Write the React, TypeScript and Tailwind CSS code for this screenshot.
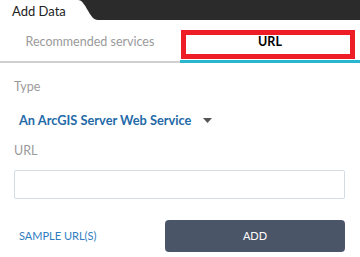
import React from "react";

export default function App() {
  return (
    <div className="relative w-[360px] h-[257px] bg-white overflow-hidden" style={{ fontFamily: "Lato, 'Open Sans', sans-serif" }}>
      {/* header */}
      <div className="flex h-[20px] bg-[#2b2b2b]">
        <div className="w-[78px] bg-white flex items-center pl-[12px] text-[13px] text-[#222] leading-none pt-[3px]">Add Data</div>
        <svg width="20" height="20" viewBox="0 0 20 20" className="block">
          <path d="M0 0 C8 0 11 20 20 20 L0 20 Z" fill="#ffffff" />
        </svg>
      </div>
      {/* tabs */}
      <div className="flex h-[43px]">
        <div className="w-[180px] flex items-center justify-center border-b-[2px] border-[#d0d0d0] text-[12.5px] text-[#9a9a9a] pt-[4px]">
          Recommended services
        </div>
        <div className="flex-1 flex items-center justify-center border-b-[3px] border-[#2bb6cf] text-[12.5px] font-bold text-black pt-[5px]">
          URL
        </div>
      </div>
      <div className="absolute left-[181px] top-[30px] w-[174px] h-[29px] border-[5px] border-[#ee1c25]" />
      {/* content */}
      <div className="px-[14px] pt-[16px]">
        <div className="text-[12.5px] text-[#9a9a9a] leading-[16px]">Type</div>
        <div className="flex items-center mt-[17px] pl-[5px] gap-[12px]">
          <span className="text-[12.8px] font-bold text-[#1f6aa8] leading-[16px]">An ArcGIS Server Web Service</span>
          <svg width="9" height="5" viewBox="0 0 9 5">
            <path d="M0 0 L9 0 L4.5 5 Z" fill="#555" />
          </svg>
        </div>
        <div className="text-[12.5px] text-[#9a9a9a] leading-[16px] mt-[15px]">URL</div>
        <div className="mt-[11px] h-[29px] w-[331px] border border-[#d3dbe3] rounded-[2px]" />
        <div className="flex items-center justify-between mt-[21px] w-[331px]">
          <span className="pl-[5px] text-[11px] text-[#2f7dbf]">SAMPLE URL(S)</span>
          <button className="w-[180px] h-[32px] rounded-[4px] bg-[#4a5568] text-white text-[11px]">ADD</button>
        </div>
      </div>
    </div>
  );
}
